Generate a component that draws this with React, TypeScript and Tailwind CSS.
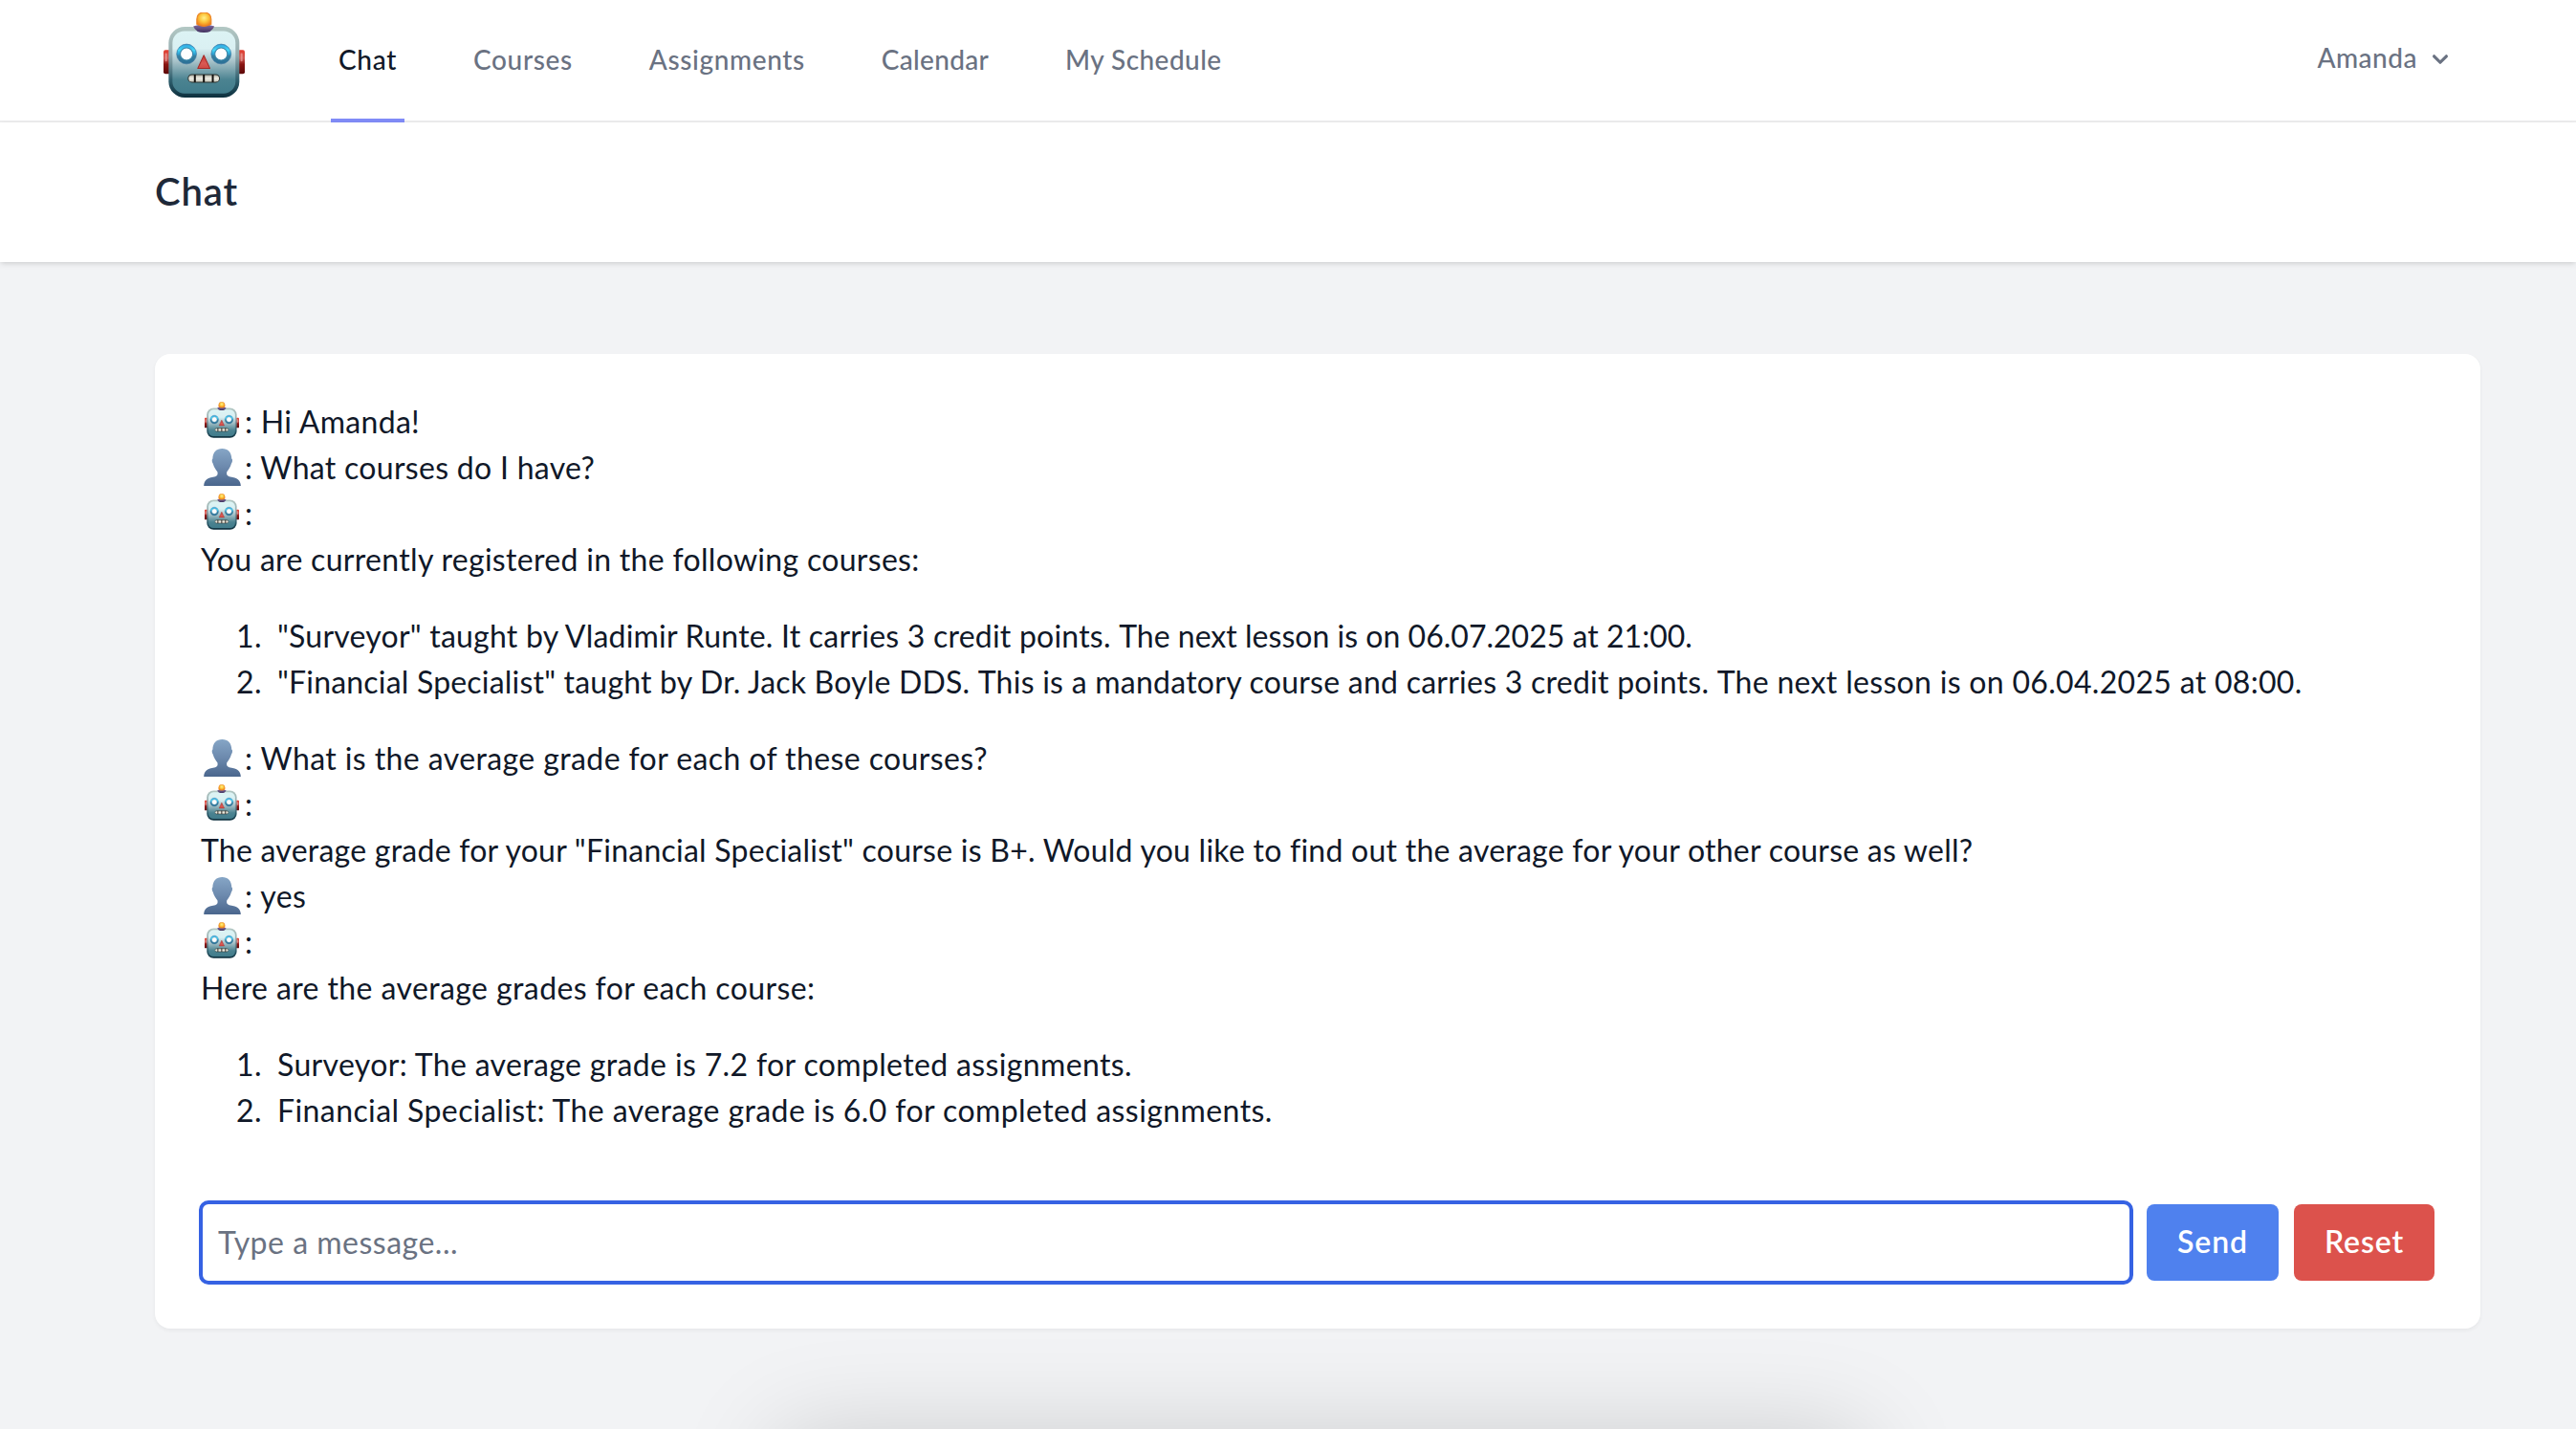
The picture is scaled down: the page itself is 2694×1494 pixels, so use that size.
import type { ReactNode } from "react";

function RobotDefs() {
  return (
    <svg className="absolute size-0" aria-hidden="true">
      <defs>
        <linearGradient id="rb-face" x1="0" y1="0" x2="0" y2="1">
          <stop offset="0" stopColor="#dcf3f4" />
          <stop offset="0.28" stopColor="#daf0f2" />
          <stop offset="0.5" stopColor="#a3bfc6" />
          <stop offset="0.78" stopColor="#4b8391" />
          <stop offset="1" stopColor="#417c8b" />
        </linearGradient>
        <linearGradient id="rb-rim" x1="0" y1="0" x2="0" y2="1">
          <stop offset="0" stopColor="#b3c8c4" />
          <stop offset="0.4" stopColor="#93aaae" />
          <stop offset="0.75" stopColor="#2f5f6e" />
          <stop offset="1" stopColor="#0d2f3d" />
        </linearGradient>
        <linearGradient id="rb-ear" x1="0" y1="0" x2="0" y2="1">
          <stop offset="0" stopColor="#e23a2c" />
          <stop offset="0.35" stopColor="#cf5a55" />
          <stop offset="0.6" stopColor="#8a1512" />
          <stop offset="1" stopColor="#5c0808" />
        </linearGradient>
        <radialGradient id="rb-bulb" cx="0.5" cy="0.4" r="0.6">
          <stop offset="0" stopColor="#fff08a" />
          <stop offset="0.5" stopColor="#fbc53c" />
          <stop offset="1" stopColor="#ee7d1a" />
        </radialGradient>
        <linearGradient id="rb-cap" x1="0" y1="0" x2="0" y2="1">
          <stop offset="0" stopColor="#8670a6" />
          <stop offset="1" stopColor="#3f2f5c" />
        </linearGradient>
        <linearGradient id="rb-eye" x1="0" y1="0" x2="0" y2="1">
          <stop offset="0" stopColor="#2f9fdc" />
          <stop offset="0.3" stopColor="#45d8f8" />
          <stop offset="0.5" stopColor="#2f9fd0" />
          <stop offset="0.6" stopColor="#37809f" />
          <stop offset="1" stopColor="#2a6f96" />
        </linearGradient>
        <linearGradient id="rb-nose" x1="0" y1="0" x2="0" y2="1">
          <stop offset="0" stopColor="#c9352f" />
          <stop offset="0.6" stopColor="#d95a55" />
          <stop offset="1" stopColor="#cf4a44" />
        </linearGradient>
        <linearGradient id="rb-teeth" x1="0" y1="0" x2="0" y2="1">
          <stop offset="0" stopColor="#a9a89b" />
          <stop offset="0.5" stopColor="#efeee4" />
          <stop offset="1" stopColor="#c4c3b6" />
        </linearGradient>
        <linearGradient id="user-fill" x1="0" y1="0" x2="0" y2="1">
          <stop offset="0" stopColor="#86a6c6" />
          <stop offset="0.5" stopColor="#6c89ad" />
          <stop offset="1" stopColor="#4a668d" />
        </linearGradient>
      </defs>
    </svg>
  );
}

function Robot({ className }: { className: string }) {
  return (
    <svg viewBox="63 39 254 266" className={className} aria-label="Bot">
      <rect x="63" y="156" width="22" height="75" rx="6" fill="url(#rb-ear)" />
      <rect x="295" y="156" width="22" height="75" rx="6" fill="url(#rb-ear)" />
      <rect x="68" y="166" width="6" height="26" rx="3" fill="#f0a5a0" opacity="0.7" />
      <rect x="304" y="166" width="6" height="26" rx="3" fill="#f0a5a0" opacity="0.7" />
      <rect x="79" y="84" width="221" height="221" rx="50" fill="url(#rb-rim)" />
      <rect x="91" y="97" width="197" height="195" rx="37" fill="url(#rb-face)" />
      <path d="M156 82 Q172 76 189 76 Q206 76 222 82 Q214 102 189 102 Q164 102 156 82Z" fill="url(#rb-cap)" />
      <path d="M167 76 V60 Q168 39 189 39 Q211 39 212 60 V76 Q200 82 189 82 Q178 82 167 76Z" fill="url(#rb-bulb)" stroke="#ec8424" strokeWidth="3" />
      <circle cx="135" cy="169" r="31" fill="url(#rb-eye)" stroke="#39729c" strokeWidth="2" />
      <circle cx="135" cy="169" r="19.500" fill="#fdfefe" stroke="#3a86a8" strokeWidth="3" />
      <circle cx="243" cy="169" r="31" fill="url(#rb-eye)" stroke="#39729c" strokeWidth="2" />
      <circle cx="243" cy="169" r="19.500" fill="#fdfefe" stroke="#3a86a8" strokeWidth="3" />
      <path d="M189 173 L208 214 H170 Z" fill="url(#rb-nose)" stroke="#a62a27" strokeWidth="3" strokeLinejoin="round" />
      <rect x="140" y="233" width="98" height="24" rx="12" fill="url(#rb-teeth)" stroke="#2b3230" strokeWidth="3" />
      <path d="M161 233V257M189 233V257M217 233V257" stroke="#14120f" strokeWidth="6" />
    </svg>
  );
}

function Person({ className }: { className: string }) {
  return (
    <svg viewBox="0 0 117 118" className={className} aria-label="User">
      <path
        d="M58 0C76 0 88 12 88 32C92 34 91 43 87 48C84 61 77 68 73 73C71 82 74 87 84 89C105 92 116 98 117 118H0C1 98 12 92 33 89C43 87 45 82 43 73C39 68 32 61 29 48C25 43 25 34 28 32C28 12 40 0 58 0Z"
        fill="url(#user-fill)"
      />
    </svg>
  );
}

function Line({ who, children }: { who?: "bot" | "user"; children: ReactNode }) {
  return (
    <div className="flex h-12 items-start whitespace-nowrap">
      {who === "bot" && <Robot className="mt-[3px] mr-1.5 ml-1 h-[38px] w-9 shrink-0" />}
      {who === "user" && <Person className="mt-[3.500px] mr-[4.500px] ml-[2.500px] h-[39px] w-[39px] shrink-0" />}
      {children}
    </div>
  );
}

function Item({ n, children }: { n: number; children: ReactNode }) {
  return (
    <li className="flex h-12 whitespace-nowrap">
      <span className="w-20 pr-4 text-right tracking-[0.5px]">{n}.</span>
      <p>{children}</p>
    </li>
  );
}

function NavLink({ active, children }: { active?: boolean; children: ReactNode }) {
  return (
    <a
      className={
        active
          ? "flex items-center border-b-4 border-[#818cf8] px-2 text-gray-900"
          : "flex items-center border-b-4 border-transparent px-2 text-gray-500"
      }
    >
      {children}
    </a>
  );
}

export default function App() {
  return (
    <div className="relative flex h-[1494px] w-[2694px] flex-col overflow-hidden bg-[#f2f3f5] font-['Lato',sans-serif] text-[32px] leading-[48px] text-gray-900">
      <RobotDefs />
      <nav className="flex h-32 shrink-0 bg-white pr-[126px] pl-[171px] text-[28px] leading-10 font-medium shadow-[inset_0_-2px_0_#eeeeef]">
        <Robot className="mt-[13px] h-[89px] w-[85px]" />
        <div className="ml-[90px] flex gap-16 whitespace-nowrap">
          <NavLink active>
            <span className="tracking-[0.68px]">Chat</span>
          </NavLink>
          <NavLink>
            <span className="tracking-[0.65px]">Courses</span>
          </NavLink>
          <NavLink>
            <span className="tracking-[0.61px]">Assignments</span>
          </NavLink>
          <NavLink>
            <span className="tracking-[0.3px]">Calendar</span>
          </NavLink>
          <NavLink>
            <span className="tracking-[0.44px]">My Schedule</span>
          </NavLink>
        </div>
        <button className="ml-auto flex items-start gap-2 pt-10 text-gray-500">
          <span className="tracking-[0.5px]">Amanda</span>
          <svg viewBox="0 0 20 20" fill="currentColor" className="mt-1.5 size-8">
            <path
              fillRule="evenodd"
              clipRule="evenodd"
              d="M5.293 7.293a1 1 0 011.414 0L10 10.586l3.293-3.293a1 1 0 111.414 1.414l-4 4a1 1 0 01-1.414 0l-4-4a1 1 0 010-1.414z"
            />
          </svg>
        </button>
      </nav>

      <header className="h-[146px] shrink-0 bg-white px-[162px] pt-[47px] shadow-[0_2px_6px_rgba(0,0,0,0.1),0_2px_4px_-2px_rgba(0,0,0,0.1)]">
        <h2 className="text-[40px] leading-[50px] font-semibold tracking-[0.9px] text-gray-800">Chat</h2>
      </header>

      <main className="pr-[100px] pl-[162px] pt-24">
        <section className="h-[1019px] rounded-2xl bg-white px-12 pt-[47px] shadow-[0_2px_4px_rgba(0,0,0,0.05)]">
          <Line who="bot">
            <span className="tracking-[0.31px]">: Hi Amanda!</span>
          </Line>
          <Line who="user">
            <span className="tracking-[0.3px]">: What courses do I have?</span>
          </Line>
          <Line who="bot">:</Line>
          <Line>
            <span className="tracking-[0.31px]">You are currently registered in the following courses:</span>
          </Line>
          <ol className="my-8">
            <Item n={1}>
              <span className="tracking-[0.22px]">
                "Surveyor" taught by Vladimir Runte. It carries 3 credit points.{" "}
              </span>
              <span className="tracking-[0.02px]">The next lesson is on 06.07.2025 at 21:00.</span>
            </Item>
            <Item n={2}>
              <span className="tracking-[0.195px]">"Financial Specialist" taught by Dr. Jack Boyle DDS. </span>
              <span className="tracking-[0.25px]">This is a mandatory course and carries 3 credit points. </span>
              <span className="tracking-[0.31px]">The next lesson is on 06.04.2025 at 08:00.</span>
            </Item>
          </ol>
          <Line who="user">
            <span className="tracking-[0.4px]">: What is the average grade for each of these courses?</span>
          </Line>
          <Line who="bot">:</Line>
          <Line>
            <span className="tracking-[0.245px]">
              The average grade for your "Financial Specialist" course is B+. Would you like to find out the average for your other course as well?
            </span>
          </Line>
          <Line who="user">
            <span className="tracking-[0.4px]">: yes</span>
          </Line>
          <Line who="bot">:</Line>
          <Line>
            <span className="tracking-[0.4px]">Here are the average grades for each course:</span>
          </Line>
          <ol className="my-8">
            <Item n={1}>
              <span className="tracking-[0.355px]">Surveyor: The average grade is 7.2 for completed assignments.</span>
            </Item>
            <Item n={2}>
              <span className="tracking-[0.415px]">Financial Specialist: The average grade is 6.0 for completed assignments.</span>
            </Item>
          </ol>
          <form className="-ml-0.5 flex items-center pt-[38px]">
            <input
              type="text"
              placeholder="Type a message..."
              className="h-[88px] w-[2023px] rounded-[10px] border-4 border-[#3662e3] bg-white px-4 pb-px tracking-[0.5px] outline-none placeholder:text-gray-500"
            />
            <button
              type="button"
              className="ml-3.5 h-20 w-[138px] rounded-lg bg-[#4f81ee] pb-[3px] font-semibold tracking-[0.9px] text-white"
            >
              Send
            </button>
            <button
              type="button"
              className="ml-4 h-20 w-[147px] rounded-lg bg-[#dc524c] pb-[3px] font-semibold tracking-[0.84px] text-white"
            >
              Reset
            </button>
          </form>
        </section>
      </main>

      <div className="absolute top-[1501px] left-[814px] h-40 w-[1136px] rounded-2xl shadow-[0_0_104px_rgba(0,0,0,0.17)]" />
    </div>
  );
}
